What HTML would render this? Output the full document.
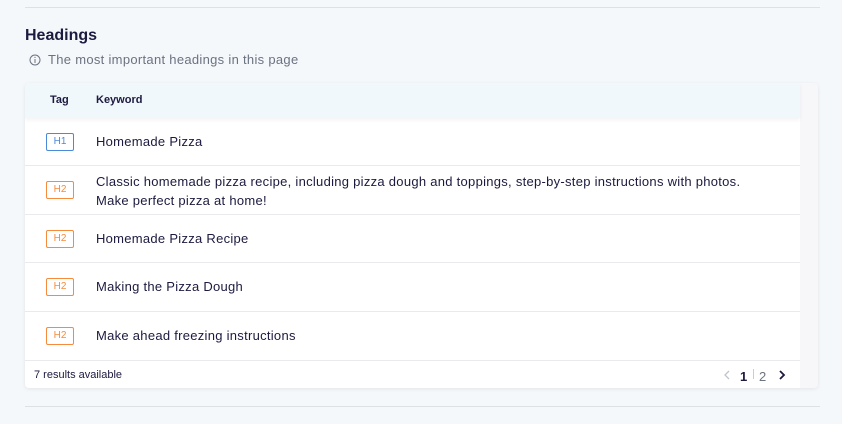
<!DOCTYPE html>
<html><head><style>
body{margin:0;width:842px;height:424px;background:#f5f8fb;font-family:"Liberation Sans",sans-serif;color:#1c1a3f;position:relative;overflow:hidden}
.line{position:absolute;left:25px;width:795px;height:1px;background:#dde1e6}
h2{position:absolute;left:25px;top:27px;margin:0;font-size:16px;font-weight:bold;color:#1c1a3f}
.sub{position:absolute;left:29px;top:52px;font-size:13px;letter-spacing:0.3px;color:#6b7280;display:flex;align-items:center;gap:7px}
.card{position:absolute;left:25px;top:83px;width:793px;height:305px;background:#f7f7fa;border-radius:4px;box-shadow:0 1px 4px rgba(0,0,0,.08);overflow:hidden}
.hdr{position:absolute;left:0;top:0;width:775px;height:35px;background:#f1f8fc;font-size:11px;font-weight:bold;box-shadow:0 2px 4px rgba(0,0,0,.05);z-index:2}
.hdr span{position:absolute;top:11px}
.row{position:absolute;left:0;width:775px;background:#fff;border-bottom:1.5px solid #e8eaee;font-size:13px;letter-spacing:0.28px;box-sizing:border-box}
.row .t{position:absolute;left:71px;line-height:19px}
.tag{position:absolute;left:21px;width:28px;height:18px;box-sizing:border-box;border:1.5px solid;border-radius:2px;font-size:10px;letter-spacing:0;text-align:center;line-height:16px}
.h1{border-color:#4a8ad8;color:#4a8ad8}.h2{border-color:#f58b3b;color:#f58b3b}
.foot{position:absolute;left:0;top:278px;width:775px;height:27px;background:#fff;font-size:11px}
</style></head><body>
<div class="line" style="top:7px"></div>
<h2>Headings</h2>
<div class="sub"><svg width="12" height="12" viewBox="0 0 12 12"><circle cx="6" cy="6" r="5" fill="none" stroke="#6b7280" stroke-width="1"/><line x1="6" y1="5" x2="6" y2="9" stroke="#6b7280"/><circle cx="6" cy="3.4" r=".6" fill="#6b7280"/></svg>The most important headings in this page</div>
<div class="card">
<div class="hdr"><span style="left:25px">Tag</span><span style="left:71px">Keyword</span></div>
<div class="row" style="top:35px;height:48px"><div class="tag h1" style="top:15px">H1</div><div class="t" style="top:14px">Homemade Pizza</div></div>
<div class="row" style="top:83px;height:49px"><div class="tag h2" style="top:15px">H2</div><div class="t" style="top:6px">Classic homemade pizza recipe, including pizza dough and toppings, step-by-step instructions with photos.<br>Make perfect pizza at home!</div></div>
<div class="row" style="top:132px;height:48px"><div class="tag h2" style="top:15px">H2</div><div class="t" style="top:14px">Homemade Pizza Recipe</div></div>
<div class="row" style="top:180px;height:49px"><div class="tag h2" style="top:15px">H2</div><div class="t" style="top:14px">Making the Pizza Dough</div></div>
<div class="row" style="top:229px;height:49px"><div class="tag h2" style="top:15px">H2</div><div class="t" style="top:14px">Make ahead freezing instructions</div></div>
<div class="foot"><span style="position:absolute;left:9px;top:8px">7 results available</span>
<svg style="position:absolute;left:698px;top:9px" width="8" height="10" viewBox="0 0 8 10"><path d="M6 1 L2 5 L6 9" fill="none" stroke="#c0c4cc" stroke-width="1.3"/></svg>
<span style="position:absolute;left:715px;top:8px;font-size:13px;font-weight:bold">1</span>
<span style="position:absolute;left:728px;top:8px;width:1px;height:10px;background:#ccc"></span>
<span style="position:absolute;left:734px;top:8px;font-size:13px;color:#6b7280">2</span>
<svg style="position:absolute;left:753px;top:9px" width="8" height="10" viewBox="0 0 8 10"><path d="M2 1 L6 5 L2 9" fill="none" stroke="#1c1a3f" stroke-width="1.8"/></svg></div>
</div>
<div class="line" style="top:406px"></div>
</body></html>
